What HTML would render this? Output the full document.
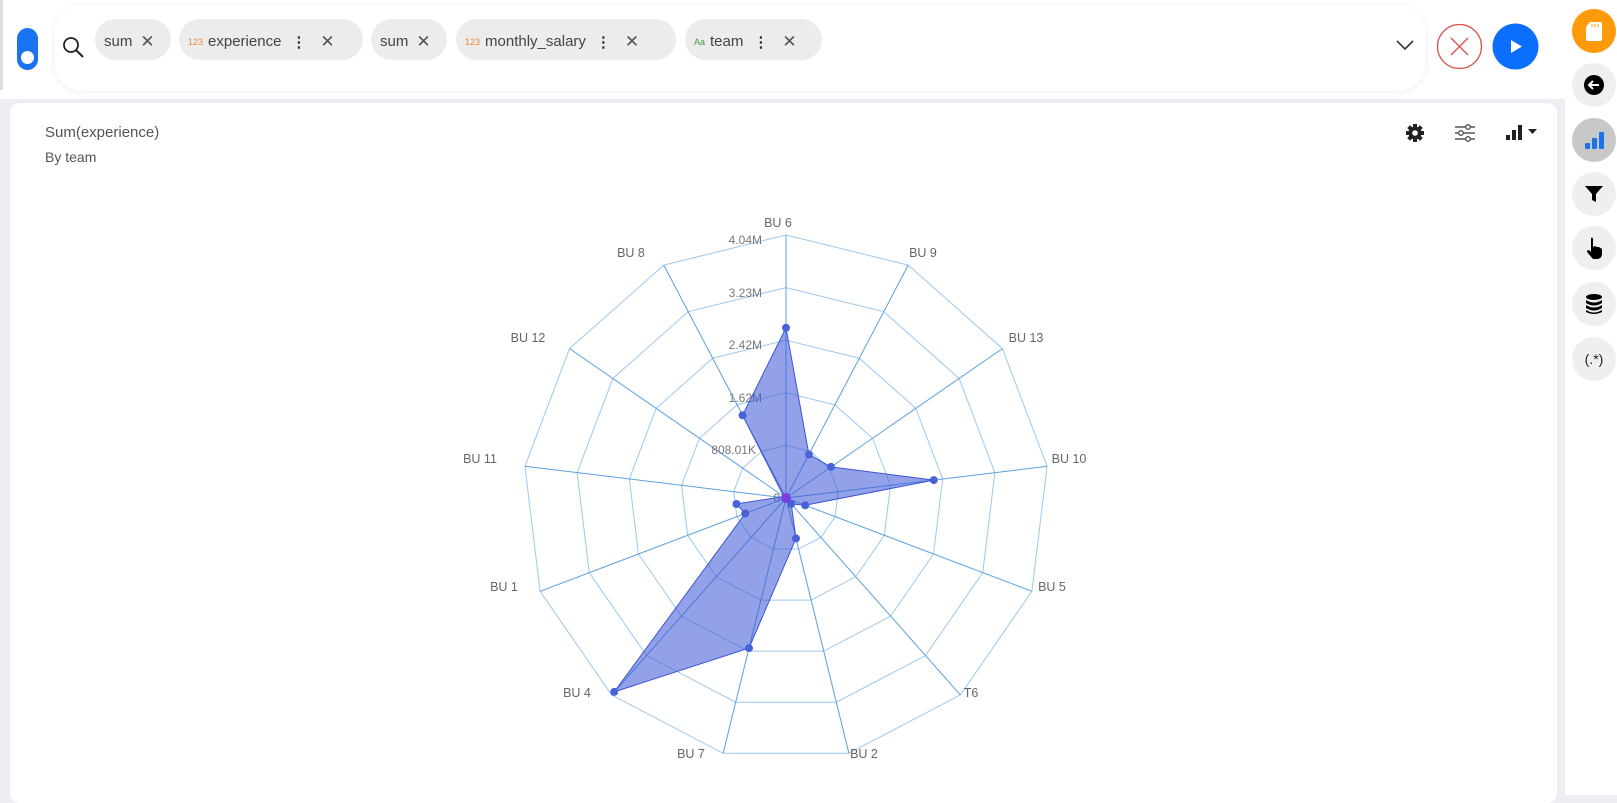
<!DOCTYPE html>
<html><head><meta charset="utf-8"><style>
*{box-sizing:border-box;margin:0;padding:0}
body{width:1617px;height:795px;overflow:hidden;background:#eceef4;font-family:"Liberation Sans",sans-serif;position:relative}
.abs{position:absolute}
.top{left:0;top:0;width:1565px;height:99px;background:#fff}
.search{left:54px;top:5px;width:1372px;height:86px;background:#fff;border-radius:28px;box-shadow:0 1px 6px rgba(0,0,0,.08)}
.chip{position:absolute;top:19px;height:41px;background:#ececec;border-radius:21px;font-size:15px;color:#444;display:flex;align-items:center;padding-left:9px;padding-top:4px;white-space:nowrap}
.chip small{font-size:9px;color:#f08a3c;margin-right:5px}
.chip small.g{color:#4a9a4a}
.x{font-size:17px;color:#555;margin-left:8px}
.dots{font-weight:bold;margin-left:10px;color:#333}
.side{left:1565px;top:0;width:52px;height:795px;background:#fff}
.sb{position:absolute;left:1572px;width:44px;height:44px;border-radius:50%;background:#efefef;display:flex;align-items:center;justify-content:center}
.card{left:10px;top:103px;width:1547px;height:700px;background:#fff;border-radius:10px}
</style></head><body>
<div class="abs top"></div>
<div class="abs" style="left:0;top:0;width:3px;height:90px;background:#ddd"></div>
<div class="abs" style="left:17px;top:28px;width:21px;height:42px;border-radius:11px;background:#1a73f0"><div style="position:absolute;left:4px;top:23px;width:13px;height:13px;border-radius:50%;background:#fff"></div></div>
<div class="abs search"></div>
<svg class="abs" style="left:62px;top:36px" width="24" height="24" viewBox="0 0 24 24"><circle cx="9" cy="9" r="7" fill="none" stroke="#222" stroke-width="1.8"/><line x1="14" y1="14" x2="21" y2="21" stroke="#222" stroke-width="2"/></svg>
<div class="chip" style="left:95px;width:76px">sum<span class="x">✕</span></div>
<div class="chip" style="left:179px;width:184px"><small>123</small>experience<span class="dots">⋮</span><span class="x" style="margin-left:14px">✕</span></div>
<div class="chip" style="left:371px;width:76px">sum<span class="x">✕</span></div>
<div class="chip" style="left:456px;width:220px"><small>123</small>monthly_salary<span class="dots">⋮</span><span class="x" style="margin-left:14px">✕</span></div>
<div class="chip" style="left:685px;width:137px"><small class="g">Aa</small>team<span class="dots">⋮</span><span class="x" style="margin-left:14px">✕</span></div>
<svg class="abs" style="left:1395px;top:38px" width="20" height="14"><polyline points="2,3 10,11 18,3" fill="none" stroke="#333" stroke-width="1.6"/></svg>
<svg class="abs" style="left:1436px;top:23px" width="47" height="47"><circle cx="23.5" cy="23.5" r="22" fill="#fff" stroke="#d9534f" stroke-width="1.3"/><path d="M15 15L32 32M32 15L15 32" stroke="#d9534f" stroke-width="1.4"/></svg>
<svg class="abs" style="left:1492px;top:23px" width="47" height="47"><circle cx="23.5" cy="23.5" r="23" fill="#0b6efd"/><path d="M19 17L30 23.5L19 30Z" fill="#fff"/></svg>

<div class="abs side"></div>
<div class="sb" style="top:9px;background:#ff9a0a"><svg width="20" height="22"><path d="M6 2H16Q18 2 18 4V19Q18 21 16 21H4Q2 21 2 19V7Z" fill="#fff"/><path d="M8 4v3M11 4v3M14 4v3" stroke="#ff9a0a" stroke-width="1"/></svg></div>
<div class="sb" style="top:63px"><svg width="22" height="22"><circle cx="11" cy="11" r="10" fill="#000"/><path d="M16 11H7M10 7L6 11L10 15" stroke="#fff" stroke-width="2" fill="none"/></svg></div>
<div class="sb" style="top:118px;background:#c8c8c8"><svg width="22" height="20"><rect x="2" y="13" width="5" height="6" rx="1" fill="#1a73e8"/><rect x="9" y="8" width="5" height="11" rx="1" fill="#1a73e8"/><rect x="16" y="2" width="5" height="17" rx="1" fill="#1a73e8"/></svg></div>
<div class="sb" style="top:172px"><svg width="20" height="20"><path d="M1 2H19L12 10V18L8 16V10Z" fill="#000"/></svg></div>
<div class="sb" style="top:226px"><svg width="22" height="24"><path d="M8 2Q10 1 10 3V11L12 10L14 11L16 11L19 13V19Q18 23 14 23H10L4 16Q4 14 6 14L8 16V3Z" fill="#000"/></svg></div>
<div class="sb" style="top:282px"><svg width="20" height="22"><ellipse cx="10" cy="4" rx="8" ry="3" fill="#000"/><path d="M2 7Q10 12 18 7V10Q10 15 2 10Z M2 12Q10 17 18 12V15Q10 20 2 15Z M2 17Q10 22 18 17V19Q10 23 2 19Z" fill="#000"/></svg></div>
<div class="sb" style="top:337px;font-size:14px;color:#222">(.*)</div>

<div class="abs card"></div>
<div class="abs" style="left:45px;top:124px;font-size:15px;color:#555">Sum(experience)</div>
<div class="abs" style="left:45px;top:149px;font-size:14px;color:#555">By team</div>
<svg class="abs" style="left:1405px;top:123px" width="20" height="20" viewBox="0 0 20 20"><g fill="#222"><circle cx="10" cy="10" r="6.5"/><rect x="8" y="1" width="4" height="18"/><rect x="1" y="8" width="18" height="4"/><rect x="8" y="1" width="4" height="18" transform="rotate(45 10 10)"/><rect x="8" y="1" width="4" height="18" transform="rotate(-45 10 10)"/></g><circle cx="10" cy="10" r="2.8" fill="#fff"/></svg>
<svg class="abs" style="left:1454px;top:123px" width="22" height="20"><g stroke="#555" stroke-width="1.4" fill="#fff"><line x1="1" y1="4" x2="21" y2="4"/><line x1="1" y1="10" x2="21" y2="10"/><line x1="1" y1="16" x2="21" y2="16"/><circle cx="14" cy="4" r="2.3"/><circle cx="7" cy="10" r="2.3"/><circle cx="14" cy="16" r="2.3"/></g></svg>
<svg class="abs" style="left:1505px;top:124px" width="36" height="18"><rect x="1" y="11" width="4" height="5" fill="#222"/><rect x="7" y="6" width="4" height="10" fill="#222"/><rect x="13" y="1" width="4" height="15" fill="#222"/><path d="M23 5H32L27.5 10Z" fill="#222"/></svg>

<svg class="abs" style="left:0;top:0" width="1617" height="795">
<defs><polygon id="ring" points="0,-263 122.2,-232.9 216.4,-149.4 261.1,-31.7 245.9,93.3 174.4,196.9 62.9,255.3 -62.9,255.3 -174.4,196.9 -245.9,93.3 -261.1,-31.7 -216.4,-149.4 -122.2,-232.9" fill="none" stroke="#9cc8ee" stroke-width="1" vector-effect="non-scaling-stroke"/></defs>
<g transform="translate(786,498)">
<use href="#ring"/>
<use href="#ring" transform="scale(0.8)"/>
<use href="#ring" transform="scale(0.6)"/>
<use href="#ring" transform="scale(0.4)"/>
<use href="#ring" transform="scale(0.2)"/>
<g stroke="#5aa0e0" stroke-width="1">
<line x1="0" y1="0" x2="0" y2="-263"/><line x1="0" y1="0" x2="122.2" y2="-232.9"/><line x1="0" y1="0" x2="216.4" y2="-149.4"/><line x1="0" y1="0" x2="261.1" y2="-31.7"/><line x1="0" y1="0" x2="245.9" y2="93.3"/><line x1="0" y1="0" x2="174.4" y2="196.9"/><line x1="0" y1="0" x2="62.9" y2="255.3"/><line x1="0" y1="0" x2="-62.9" y2="255.3"/><line x1="0" y1="0" x2="-174.4" y2="196.9"/><line x1="0" y1="0" x2="-245.9" y2="93.3"/><line x1="0" y1="0" x2="-261.1" y2="-31.7"/><line x1="0" y1="0" x2="-216.4" y2="-149.4"/><line x1="0" y1="0" x2="-122.2" y2="-232.9"/>
</g>
<g font-size="12" fill="#777" text-anchor="end">
<text x="-24" y="-254">4.04M</text><text x="-24" y="-201">3.23M</text><text x="-24" y="-149">2.42M</text><text x="-24" y="-96">1.62M</text><text x="-30" y="-44">808.01K</text><text x="-6" y="4">0</text>
</g>
<polygon points="0,-170.2 22.9,-43.6 45,-31.1 147.8,-17.9 19.2,7.3 5.2,5.9 10,40.4 -37,150.1 -171.8,193.9 -40.8,15.5 -49.6,6 -2.2,-1.5 -43.4,-82.7" fill="#3a55d6" fill-opacity="0.55" stroke="#3a55d6" stroke-width="1"/>
<g fill="#4a62d8">
<circle cx="0" cy="-170.2" r="4"/><circle cx="22.9" cy="-43.6" r="4"/><circle cx="45" cy="-31.1" r="4"/><circle cx="147.8" cy="-17.9" r="4"/><circle cx="19.2" cy="7.3" r="4"/><circle cx="5.2" cy="5.9" r="4"/><circle cx="10" cy="40.4" r="4"/><circle cx="-37" cy="150.1" r="4"/><circle cx="-171.8" cy="193.9" r="4"/><circle cx="-40.8" cy="15.5" r="4"/><circle cx="-49.6" cy="6" r="4"/><circle cx="-43.4" cy="-82.7" r="4"/>
</g>
<circle cx="0" cy="0" r="5" fill="#7b3fe0"/>
</g>
<g font-size="12.5" fill="#666" text-anchor="middle">
<text x="778" y="227">BU 6</text><text x="923" y="257">BU 9</text><text x="1026" y="342">BU 13</text><text x="1069" y="463">BU 10</text><text x="1052" y="591">BU 5</text><text x="971" y="697">T6</text><text x="864" y="758">BU 2</text><text x="691" y="758">BU 7</text><text x="577" y="697">BU 4</text><text x="504" y="591">BU 1</text><text x="480" y="463">BU 11</text><text x="528" y="342">BU 12</text><text x="631" y="257">BU 8</text>
</g>
</svg>
</body></html>
